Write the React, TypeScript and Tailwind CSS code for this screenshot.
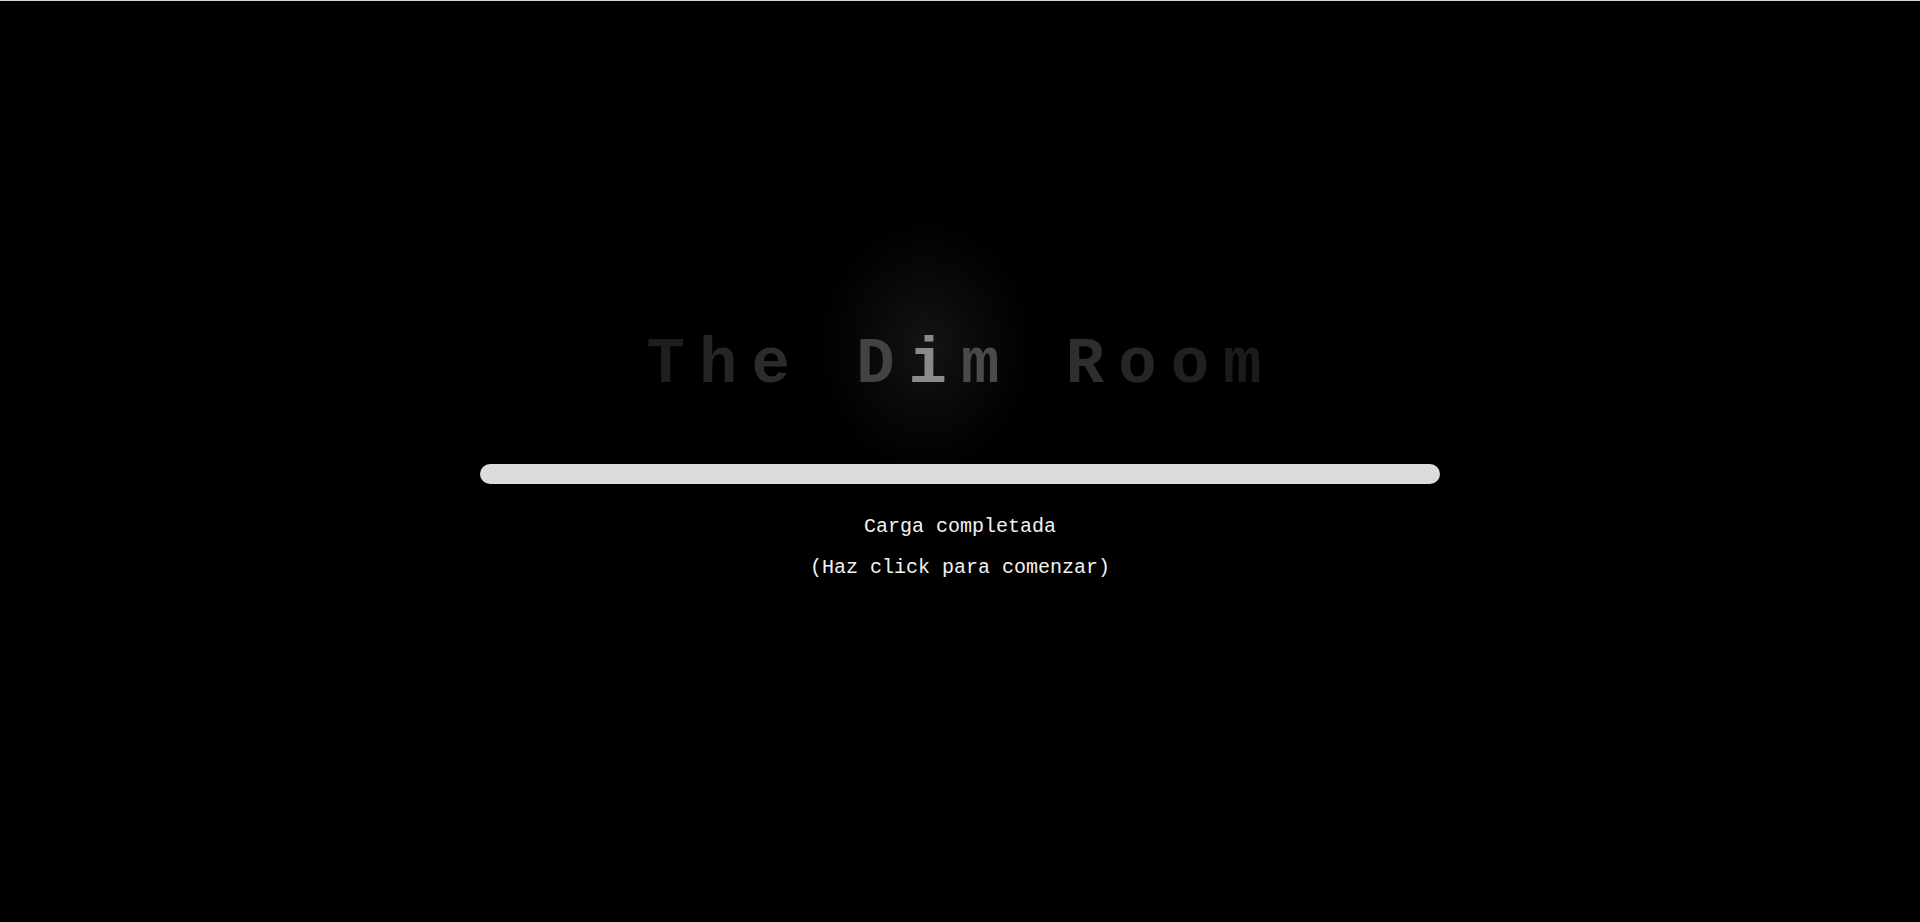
import React from "react";

const letters: [string, string][] = [
  ["T", "text-[#1e1e1e]"],
  ["h", "text-[#252525]"],
  ["e", "text-[#2c2c2c]"],
  [" ", ""],
  ["D", "text-[#434343]"],
  ["i", "text-[#8a8a8a]"],
  ["m", "text-[#4a4a4a]"],
  [" ", ""],
  ["R", "text-[#2e2e2e]"],
  ["o", "text-[#262626]"],
  ["o", "text-[#202020]"],
  ["m", "text-[#1b1b1b]"],
];

export default function App() {
  return (
    <div className="h-[922px] w-full overflow-hidden bg-black border-t border-[#d4d4d4] font-['Liberation_Mono','Courier_New',monospace]">
      <div className="flex flex-col items-center pt-[332px]">
        {/* title with the little spotlight */}
        <div className="relative">
          <div className="pointer-events-none absolute left-[171px] top-[-117px] h-[260px] w-[220px] rounded-full bg-[radial-gradient(ellipse_at_center,rgba(255,255,255,0.08)_0%,rgba(255,255,255,0.035)_35%,rgba(0,0,0,0)_70%)]" />
          <h1 className="relative h-16 text-[64px] leading-none font-bold tracking-[14px] whitespace-pre pl-[2px]">
            {letters.map(([ch, cls], i) => (
              <span key={i} className={cls}>
                {ch}
              </span>
            ))}
          </h1>
        </div>

        <div className="mt-[67px] h-5 w-[960px] rounded-full bg-[#dcdcdc]" />

        <p className="mt-[33px] text-[20px] leading-none text-[#f2f2f2]">
          Carga completada
        </p>
        <p className="mt-[21px] text-[20px] leading-none text-[#f2f2f2]">
          (Haz click para comenzar)
        </p>
      </div>
    </div>
  );
}
